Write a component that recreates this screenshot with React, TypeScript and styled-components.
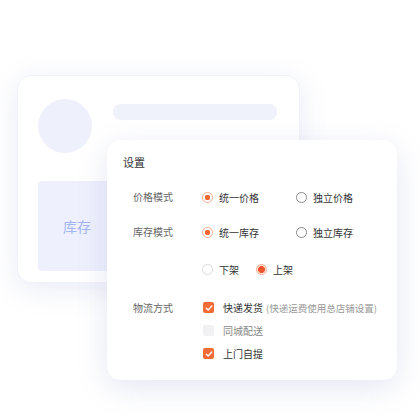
import React from 'react';
import styled, { createGlobalStyle } from 'styled-components';

const GlobalStyle = createGlobalStyle`
  body {
    margin: 0;
    background: #fff;
    font-family: "Noto Sans CJK SC", "Noto Sans", sans-serif;
  }
`;

const ORANGE = '#f26b35';

const Stage = styled.div`
  position: relative;
  width: 420px;
  height: 420px;
  overflow: hidden;
  padding: 75px 0 0 17px;
  box-sizing: border-box;
`;

const BackCard = styled.div`
  width: 283px;
  height: 208px;
  box-sizing: border-box;
  padding: 23px 22px 0 20px;
  background: #fff;
  border-radius: 14px;
  box-shadow: 0 6px 28px rgba(120, 132, 200, 0.16);
  border: 1px solid #f0f2fa;
`;

const Profile = styled.div`
  display: flex;
  align-items: flex-start;
  gap: 21px;
`;

const Avatar = styled.div`
  width: 54px;
  height: 54px;
  border-radius: 50%;
  background: #eef0fc;
  flex: none;
`;

const Bar = styled.div`
  flex: 1;
  height: 16px;
  margin-top: 5px;
  border-radius: 8px;
  background: #eff1fb;
`;

const StockBox = styled.div`
  margin-top: 28px;
  width: 78px;
  height: 90px;
  border-radius: 4px;
  background: #eef0fd;
  display: flex;
  align-items: center;
  justify-content: center;
  color: #a3b5f4;
  font-size: 14px;
`;

const FrontCard = styled.div`
  position: absolute;
  left: 107px;
  top: 140px;
  width: 290px;
  height: 240px;
  box-sizing: border-box;
  padding: 14px 16px 0;
  background: #fff;
  border-radius: 14px;
  box-shadow: 0 8px 30px rgba(110, 120, 190, 0.18);
`;

const Title = styled.div`
  font-size: 11px;
  line-height: 16px;
  color: #333;
`;

const Row = styled.div<{ $mt: number }>`
  display: flex;
  align-items: flex-start;
  margin-top: ${(p) => p.$mt}px;
  padding-left: 10px;
`;

const Label = styled.div<{ $lh?: number }>`
  width: 69px;
  flex: none;
  font-size: 10px;
  line-height: ${(p) => p.$lh ?? 20}px;
  color: #666;
`;

const Options = styled.div`
  display: flex;
  flex-direction: column;
  flex: none;
`;

const Line = styled.div`
  display: flex;
  align-items: center;
  height: 23px;
  white-space: nowrap;
`;

const Option = styled.div<{ $w?: number }>`
  display: flex;
  align-items: center;
  width: ${(p) => (p.$w ? `${p.$w}px` : 'auto')};
  height: 20px;
  font-size: 10px;
  color: #333;
`;

const Radio = styled.span<{ $state: 'on' | 'off' | 'dim' | 'strong' }>`
  box-sizing: border-box;
  width: 11px;
  height: 11px;
  border-radius: 50%;
  margin-right: 6px;
  flex: none;
  border: 1px solid
    ${(p) =>
      p.$state === 'off' ? '#8a8a8a' : p.$state === 'dim' ? '#dcdcdc' : '#f6b08f'};
  background: ${(p) =>
    p.$state === 'on'
      ? `radial-gradient(circle, ${ORANGE} 0 2.6px, #fff 3px)`
      : p.$state === 'strong'
      ? `radial-gradient(circle, #f0552e 0 3.3px, #fde3d8 3.7px)`
      : '#fff'};
`;

const Check = styled.span<{ $on: boolean }>`
  box-sizing: border-box;
  width: 11px;
  height: 11px;
  border-radius: 2px;
  margin-right: 9px;
  margin-left: 1px;
  flex: none;
  display: flex;
  align-items: center;
  justify-content: center;
  background: ${(p) => (p.$on ? ORANGE : '#f1f1f3')};
`;

const CheckText = styled.span<{ $muted?: boolean }>`
  font-size: 10px;
  color: ${(p) => (p.$muted ? '#888' : '#333')};
`;

const Note = styled.span`
  color: #999;
  margin-left: 3px;
  font-size: 9.5px;
`;

const Tick = () => (
  <svg width="8" height="8" viewBox="0 0 8 8">
    <path d="M1.3 4.2 L3.2 6 L6.8 2" fill="none" stroke="#fff" strokeWidth="1.4" strokeLinecap="round" strokeLinejoin="round" />
  </svg>
);

const App = () => {
  return (
    <Stage>
      <GlobalStyle />
      <BackCard>
        <Profile>
          <Avatar />
          <Bar />
        </Profile>
        <StockBox>库存</StockBox>
      </BackCard>
      <FrontCard>
        <Title>设置</Title>
        <Row $mt={17}>
          <Label>价格模式</Label>
          <Option $w={94}><Radio $state="on" />统一价格</Option>
          <Option><Radio $state="off" />独立价格</Option>
        </Row>
        <Row $mt={15}>
          <Label>库存模式</Label>
          <Option $w={94}><Radio $state="on" />统一库存</Option>
          <Option><Radio $state="off" />独立库存</Option>
        </Row>
        <Row $mt={17}>
          <Label />
          <Option $w={54}><Radio $state="dim" />下架</Option>
          <Option><Radio $state="strong" />上架</Option>
        </Row>
        <Row $mt={17}>
          <Label $lh={23}>物流方式</Label>
          <Options>
            <Line>
              <Check $on><Tick /></Check>
              <CheckText>快递发货<Note>(快递运费使用总店铺设置)</Note></CheckText>
            </Line>
            <Line>
              <Check $on={false} />
              <CheckText $muted>同城配送</CheckText>
            </Line>
            <Line>
              <Check $on><Tick /></Check>
              <CheckText>上门自提</CheckText>
            </Line>
          </Options>
        </Row>
      </FrontCard>
    </Stage>
  );
};

export default App;
